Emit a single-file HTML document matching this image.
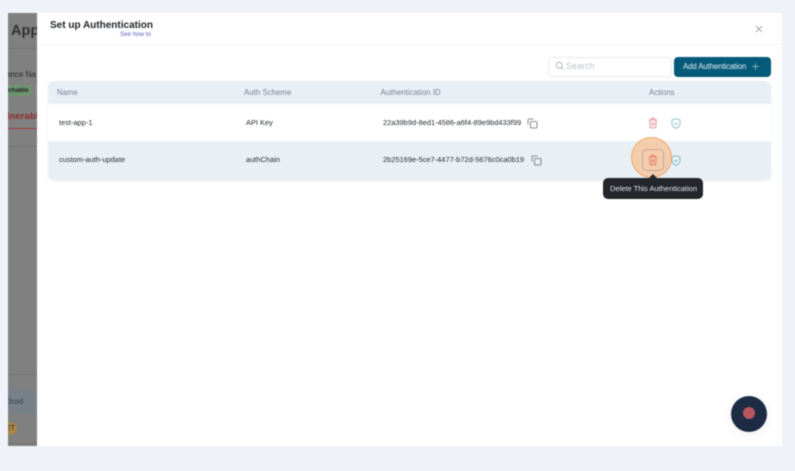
<!DOCTYPE html>
<html>
<head>
<meta charset="utf-8">
<style>
html,body{margin:0;padding:0;width:795px;height:471px;overflow:hidden;background:#eff3f9;font-family:"Liberation Sans",sans-serif;}
.a{position:absolute;white-space:nowrap;}
#wrap{position:relative;width:795px;height:471px;overflow:hidden;filter:blur(0.45px);}
svg{position:absolute;overflow:visible;}
</style>
</head>
<body>
<div id="wrap">
<!-- backdrop panel -->
<div class="a" style="left:8px;top:13px;width:29px;height:433px;background:#808080;"></div>
<div class="a" style="left:8px;top:48px;width:29px;height:1px;background:#747474;"></div>
<div class="a" style="left:8px;top:146px;width:29px;height:1px;background:#747474;"></div>
<div class="a" style="left:8px;top:128px;width:29px;height:1px;background:#a03a3a;"></div>
<div class="a" style="left:8px;top:390px;width:29px;height:24px;background:#78808a;"></div>
<div class="a" style="left:8px;top:374px;width:29px;height:1px;background:#747474;"></div>
<div class="a" style="left:8px;top:443px;width:29px;height:1px;background:#747474;"></div>
<div class="a" style="left:8px;top:13px;width:29px;height:433px;overflow:hidden;">
  <div class="a" style="left:3px;top:-3px;font-size:14.500px;font-weight:bold;color:#333;line-height:42px;height:42px;">App</div>
  <div class="a" style="left:-2px;top:56px;font-size:8px;color:#2c2c2c;line-height:12px;">ance Na</div>
  <div class="a" style="left:-14px;top:72px;width:38px;height:11px;border-radius:6px;background:#6d9570;"></div>
  <div class="a" style="left:26px;top:72px;width:10px;height:11px;border-radius:6px;background:#8d7f93;"></div>
  <div class="a" style="left:0px;top:71px;font-size:6.500px;font-weight:bold;color:#222;line-height:13px;">chable</div>
  <div class="a" style="left:-1px;top:96.500px;font-size:9.500px;font-weight:bold;color:#8f2c2c;line-height:13px;">Inerabl</div>
  <div class="a" style="left:-2px;top:383px;font-size:8px;font-weight:bold;color:#4a525e;line-height:12px;">thod</div>
  <div class="a" style="left:-8px;top:409px;width:17px;height:13px;border-radius:7px;background:#a98648;"></div>
  <div class="a" style="left:-2px;top:409px;font-size:7px;color:#2c2c2c;line-height:13px;">ET</div>
</div>

<!-- modal -->
<div class="a" style="left:37px;top:13px;width:745px;height:433px;background:#fff;"></div>
<div class="a" style="left:37px;top:44px;width:745px;height:1px;background:#f3f5f8;"></div>
<div class="a" style="left:50px;top:19px;font-size:10px;font-weight:bold;color:#22262c;line-height:14px;">Set up Authentication</div>
<div class="a" style="left:120px;top:30px;font-size:6.200px;color:#5f5fc4;line-height:9px;">See how to</div>
<svg style="left:754px;top:24px;" width="10" height="10" viewBox="0 0 10 10"><path d="M2 2L8 8M8 2L2 8" stroke="#8a929c" stroke-width="0.8" fill="none"/></svg>

<!-- search -->
<div class="a" style="left:548px;top:57px;width:122px;height:18px;border:1px solid #e8ebef;border-radius:4px;background:#fff;"></div>
<svg style="left:555px;top:61px;" width="10" height="10" viewBox="0 0 10 10"><circle cx="4.200" cy="4.200" r="3" stroke="#a4abb4" stroke-width="0.8" fill="none"/><path d="M6.500 6.500L8.700 8.700" stroke="#a4abb4" stroke-width="0.8"/></svg>
<div class="a" style="left:566px;top:60px;font-size:9px;color:#c0c5cc;line-height:13px;">Search</div>

<!-- add button -->
<div class="a" style="left:674px;top:57px;width:97px;height:20px;border-radius:4px;background:#045a78;"></div>
<div class="a" style="left:683px;top:61px;font-size:7.800px;color:#e6eff3;line-height:12px;letter-spacing:-0.1px;">Add Authentication</div>
<svg style="left:751px;top:62px;" width="9" height="9" viewBox="0 0 9 9"><path d="M4.500 1V8M1 4.500H8" stroke="#a9c6d2" stroke-width="0.7"/></svg>

<!-- table -->
<div class="a" style="left:48px;top:81px;width:723px;height:99px;border-radius:6px;background:#fff;box-shadow:0 1px 2px rgba(60,80,110,.12);overflow:hidden;">
  <div class="a" style="left:0;top:0;width:723px;height:23px;background:#e9f0f5;"></div>
  <div class="a" style="left:0;top:60px;width:723px;height:39px;background:#e9f0f5;"></div>
</div>
<div class="a" style="left:57px;top:87px;font-size:7.800px;color:#737f94;line-height:12px;">Name</div>
<div class="a" style="left:244px;top:87px;font-size:7.800px;color:#737f94;line-height:12px;letter-spacing:0.05px;">Auth Scheme</div>
<div class="a" style="left:380.500px;top:87px;font-size:7.800px;color:#737f94;line-height:12px;letter-spacing:0.05px;">Authentication ID</div>
<div class="a" style="left:649px;top:87px;font-size:7.800px;color:#737f94;line-height:12px;">Actions</div>

<div class="a" style="left:59px;top:116.500px;font-size:7.450px;color:#2a2e35;line-height:12px;">test-app-1</div>
<div class="a" style="left:246px;top:116.500px;font-size:7.450px;color:#2a2e35;line-height:12px;">API Key</div>
<div class="a" style="left:383px;top:116.500px;font-size:7.450px;color:#2a2e35;line-height:12px;">22a39b9d-8ed1-4586-a6f4-89e9bd433f99</div>
<div class="a" style="left:59px;top:154px;font-size:7.450px;color:#2a2e35;line-height:12px;">custom-auth-update</div>
<div class="a" style="left:246px;top:154px;font-size:7.450px;color:#2a2e35;line-height:12px;">authChain</div>
<div class="a" style="left:383px;top:154px;font-size:7.450px;color:#2a2e35;line-height:12px;">2b25169e-5ce7-4477-b72d-5676c0ca0b19</div>

<!-- copy icons -->
<svg style="left:527px;top:117.500px;" width="11" height="11" viewBox="0 0 11 11"><rect x="3.500" y="3.500" width="6.500" height="6.500" rx="1" stroke="#666c74" stroke-width="0.8" fill="none"/><path d="M1 6.500V2A1 1 0 0 1 2 1H6.500" stroke="#666c74" stroke-width="0.8" fill="none"/></svg>
<svg style="left:530.500px;top:154.500px;" width="11" height="11" viewBox="0 0 11 11"><rect x="3.500" y="3.500" width="6.500" height="6.500" rx="1" stroke="#666c74" stroke-width="0.8" fill="none"/><path d="M1 6.500V2A1 1 0 0 1 2 1H6.500" stroke="#666c74" stroke-width="0.8" fill="none"/></svg>

<!-- row 1 actions -->
<svg style="left:648px;top:117px;" width="10" height="12" viewBox="0 0 10 12"><path d="M1 2.800H9M3.700 2.800V1.200H6.300V2.800M1.800 2.800L2.300 10.800H7.700L8.200 2.800M4.200 5V8.800M5.800 5V8.800" stroke="#e08a92" stroke-width="0.9" fill="none"/></svg>
<svg style="left:670.500px;top:117.500px;" width="10" height="11" viewBox="0 0 10 11"><path d="M5 0.600L9 2V5.500C9 7.800 7.200 9.500 5 10.400C2.800 9.500 1 7.800 1 5.500V2Z" stroke="#74b8c2" stroke-width="0.8" fill="none"/><path d="M3.400 5.500L4.600 6.700L6.700 4.400" stroke="#74b8c2" stroke-width="0.8" fill="none"/></svg>

<!-- row 2 actions -->
<svg style="left:670.500px;top:154.500px;" width="10" height="11" viewBox="0 0 10 11"><path d="M5 0.600L9 2V5.500C9 7.800 7.200 9.500 5 10.400C2.800 9.500 1 7.800 1 5.500V2Z" stroke="#6cb2bd" stroke-width="0.8" fill="none"/><path d="M3.400 5.500L4.600 6.700L6.700 4.400" stroke="#6cb2bd" stroke-width="0.8" fill="none"/></svg>
<div class="a" style="left:631px;top:137px;width:39px;height:39px;border-radius:50%;background:rgba(247,190,140,.7);border:1.500px solid #efa767;"></div>
<div class="a" style="left:642px;top:149px;width:20px;height:20px;border-radius:5px;border:1px solid #c9a59a;"></div>
<svg style="left:648px;top:154px;" width="10" height="12" viewBox="0 0 10 12"><path d="M1 2.800H9M3.700 2.800V1.200H6.300V2.800M1.800 2.800L2.300 10.800H7.700L8.200 2.800M4.200 5V8.800M5.800 5V8.800" stroke="#e2705c" stroke-width="0.9" fill="none"/></svg>

<!-- tooltip -->
<div class="a" style="left:649px;top:174px;width:0;height:0;border-left:4px solid transparent;border-right:4px solid transparent;border-bottom:4px solid #2b2a2c;"></div>
<div class="a" style="left:603px;top:178px;width:100px;height:21px;border-radius:5px;background:#23262b;"></div>
<div class="a" style="left:610px;top:183px;font-size:7.500px;color:#e8e8e8;line-height:12px;">Delete This Authentication</div>

<!-- fab -->
<div class="a" style="left:731px;top:396px;width:36px;height:36px;border-radius:50%;background:#1e2b45;box-shadow:0 2px 10px rgba(0,0,0,.08);"></div>
<div class="a" style="left:743px;top:407px;width:12px;height:12px;border-radius:50%;background:#b9565f;"></div>
</div>
</body>
</html>
